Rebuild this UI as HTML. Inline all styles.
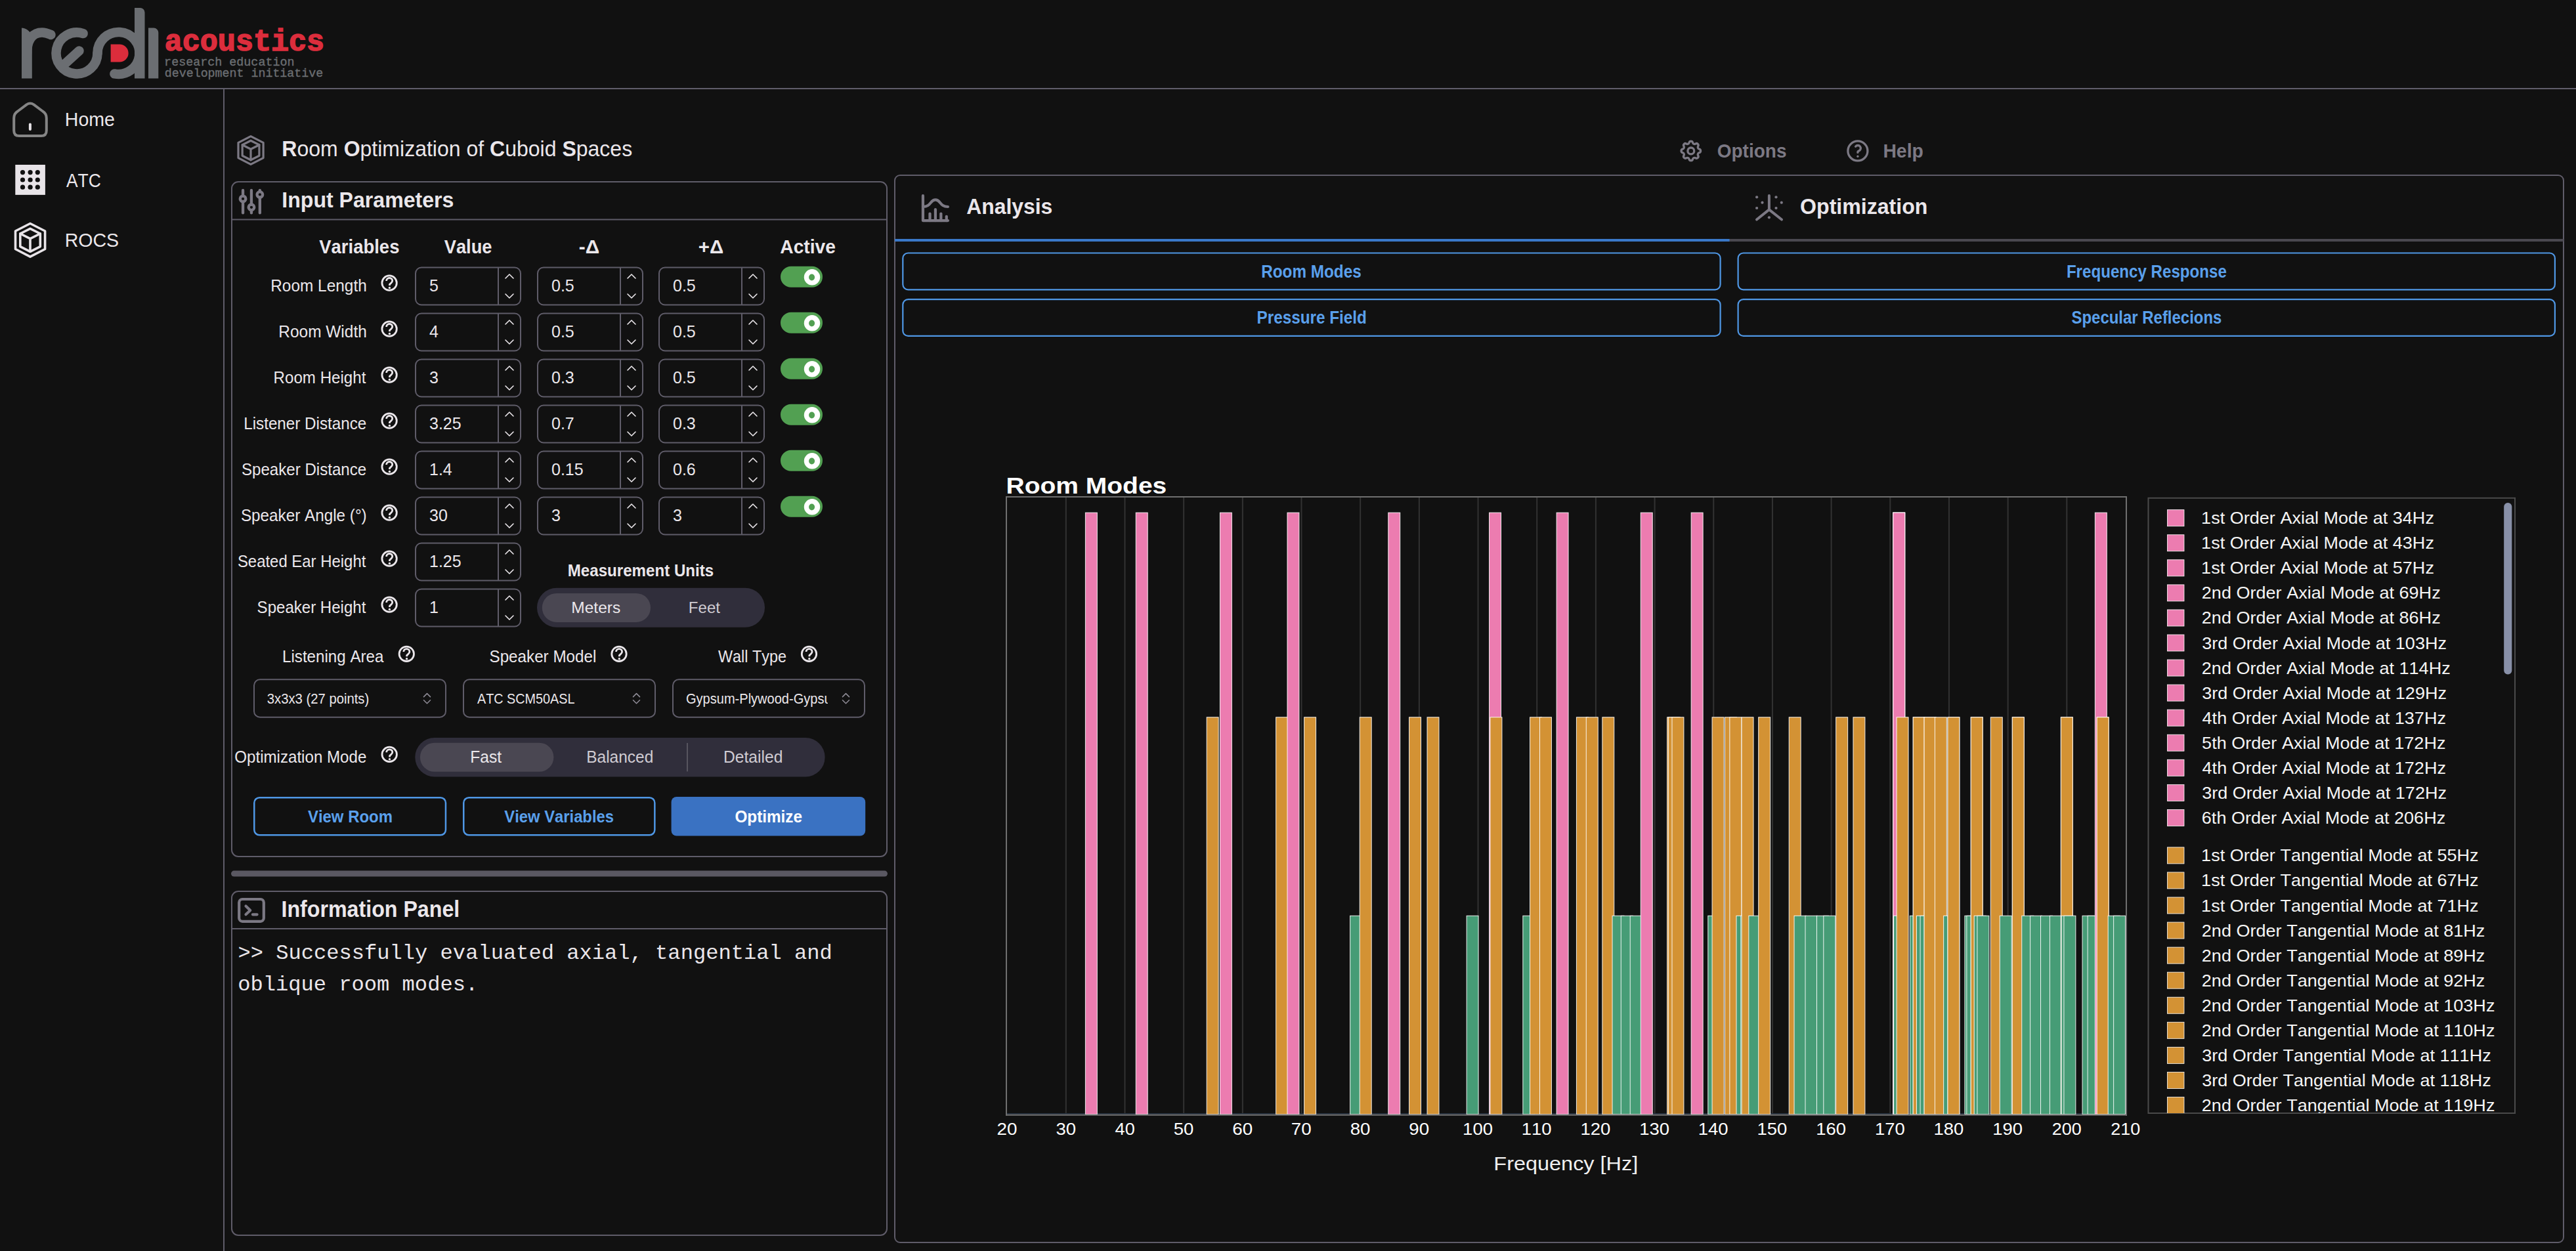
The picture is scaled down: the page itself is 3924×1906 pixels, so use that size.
<!DOCTYPE html>
<html><head><meta charset="utf-8"><title>ROCS</title>
<style>html,body{margin:0;padding:0;background:#111111;overflow:hidden} svg{display:block} text{font-kerning:none}</style></head>
<body><svg width="3924" height="1906" viewBox="0 0 3924 1906">
<rect x="0" y="0" width="3924" height="1906" rx="0" fill="#111111" />
<rect x="0" y="134" width="3924" height="2" rx="0" fill="#5f5c69" />
<rect x="340" y="136" width="2" height="1770" rx="0" fill="#5f5c69" />
<g fill="none" stroke="#6b6e72" stroke-width="14.5">
<path d="M33 119.5 V42.6 Q40.5 43.2 44.8 48.2 L48.8 52 V119.5 Z" fill="#6b6e72" stroke="none"/>
<path d="M41 82 C41 58 52 49.5 64 49.5 C70 49.5 73 51 77.5 53" stroke-linecap="round"/>
<path d="M126.73 51.04 A31.5 31.5 0 1 0 148.5 81" stroke-linecap="round"/>
<path d="M98 98 L120.5 77.5" stroke-linecap="round"/>
<path d="M148.5 81 A32 32 0 1 1 174.39 112.41" stroke-linecap="round"/>
</g>
<path d="M205 119.5 V12 H213.5 A7 7 0 0 1 220.5 19 V119.5 Z" fill="#6b6e72"/>
<path d="M226 119.5 V42.6 H234.3 A7 7 0 0 1 241.3 49.6 V119.5 Z" fill="#6b6e72"/>
<path d="M168.6 67.5 H182.1 A13.5 13.5 0 0 1 182.1 94.5 H168.6 Z" fill="#dc2d3c"/>
<text x="250.77" y="77.4" font-family="Liberation Mono" font-size="44" font-weight="700" fill="#dc2d3c" textLength="243.28" lengthAdjust="spacingAndGlyphs" stroke="#dc2d3c" stroke-width="1.6" transform="translate(0,77.4) scale(1,1.04) translate(0,-77.4)">acoustics</text>
<text x="250.13" y="99.6" font-family="Liberation Mono" font-size="18.2" font-weight="400" fill="#6b6e72" textLength="198.38" lengthAdjust="spacingAndGlyphs" stroke="#6b6e72" stroke-width="0.35">research education</text>
<text x="250.77" y="116.6" font-family="Liberation Mono" font-size="18.2" font-weight="400" fill="#6b6e72" textLength="241.44" lengthAdjust="spacingAndGlyphs" stroke="#6b6e72" stroke-width="0.35">development initiative</text>
<path d="M21.2 180 Q21.2 173 27 169.5 L40.5 159.3 Q46 155.6 51.5 159.3 L65 169.5 Q70.8 173 70.8 180 V199 Q70.8 207 62.8 207 H29.2 Q21.2 207 21.2 199 Z" fill="none" stroke="#858585" stroke-width="4" stroke-linejoin="round"/>
<path d="M45.9 189.6 V196.9" stroke="#e6e2e6" stroke-width="4" stroke-linecap="round"/>
<text x="98.86" y="192.3" font-family="Liberation Sans" font-size="30.23" font-weight="400" fill="#ebe7eb" textLength="76.11" lengthAdjust="spacingAndGlyphs" >Home</text>
<rect x="23.3" y="251" width="45.6" height="45.9" rx="0" fill="#e8e4e8" />
<circle cx="34.5" cy="262.6" r="3.6" fill="#111111"/>
<circle cx="46.1" cy="262.6" r="3.6" fill="#111111"/>
<circle cx="57.3" cy="262.6" r="3.6" fill="#111111"/>
<circle cx="34.5" cy="274" r="3.6" fill="#111111"/>
<circle cx="46.1" cy="274" r="3.6" fill="#111111"/>
<circle cx="57.3" cy="274" r="3.6" fill="#111111"/>
<circle cx="34.5" cy="285.2" r="3.6" fill="#111111"/>
<circle cx="46.1" cy="285.2" r="3.6" fill="#111111"/>
<circle cx="57.3" cy="285.2" r="3.6" fill="#111111"/>
<text x="100.95" y="284.8" font-family="Liberation Sans" font-size="29.8" font-weight="400" fill="#ebe7eb" textLength="52.86" lengthAdjust="spacingAndGlyphs" >ATC</text>
<g fill="none" stroke="#e8e4e8" stroke-width="3.6" stroke-linejoin="round" stroke-linecap="round">
<path d="M46 340.5 L68.6 352 L68.6 379.5 L46 391.1 L23.5 379.5 L23.5 352 Z"/>
<path d="M46 348.3 L61.3 356 L61.3 375.6 L46 383.3 L30.8 375.6 L30.8 356 Z"/>
<path d="M30.8 356 L46 363.7 L61.3 356 M46 363.7 L46 383.3"/>
</g>
<text x="98.66" y="376.4" font-family="Liberation Sans" font-size="29.65" font-weight="400" fill="#ebe7eb" textLength="82.45" lengthAdjust="spacingAndGlyphs" >ROCS</text>
<g fill="none" stroke="#7c7984" stroke-width="3.2" stroke-linejoin="round" stroke-linecap="round">
<path d="M382 207.62 L401.1 217.34 L401.1 240.58 L382 250.38 L362.99 240.58 L362.99 217.34 Z"/>
<path d="M382 214.21 L394.93 220.72 L394.93 237.28 L382 243.79 L369.16 237.28 L369.16 220.72 Z"/>
<path d="M369.16 220.72 L382 227.23 L394.93 220.72 M382 227.23 L382 243.79"/>
</g>
<text x="429.36" y="238.2" font-family="Liberation Sans" font-size="33.58" fill="#ebe7eb" textLength="533.8" lengthAdjust="spacingAndGlyphs" ><tspan font-weight="700">R</tspan><tspan font-weight="400">oom </tspan><tspan font-weight="700">O</tspan><tspan font-weight="400">ptimization of </tspan><tspan font-weight="700">C</tspan><tspan font-weight="400">uboid </tspan><tspan font-weight="700">S</tspan><tspan font-weight="400">paces</tspan></text>
<g transform="translate(2556.12,210.22) scale(1.64)" fill="none" stroke="#7c7984" stroke-width="2.0121951219512195" stroke-linecap="round" stroke-linejoin="round">
<path d="M10.325 4.317c.426 -1.756 2.924 -1.756 3.35 0a1.724 1.724 0 0 0 2.573 1.066c1.543 -.94 3.31 .826 2.37 2.37a1.724 1.724 0 0 0 1.065 2.572c1.756 .426 1.756 2.924 0 3.35a1.724 1.724 0 0 0 -1.066 2.573c.94 1.543 -.826 3.31 -2.37 2.37a1.724 1.724 0 0 0 -2.572 1.065c-.426 1.756 -2.924 1.756 -3.35 0a1.724 1.724 0 0 0 -2.573 -1.066c-1.543 .94 -3.31 -.826 -2.37 -2.37a1.724 1.724 0 0 0 -1.065 -2.572c-1.756 -.426 -1.756 -2.924 0 -3.35a1.724 1.724 0 0 0 1.066 -2.573c-.94 -1.543 .826 -3.31 2.37 -2.37c1 .608 2.296 .07 2.572 -1.065z"/>
<circle cx="12" cy="12" r="3"/></g>
<text x="2615.75" y="240.3" font-family="Liberation Sans" font-size="29.94" font-weight="700" fill="#7c7984" textLength="105.7" lengthAdjust="spacingAndGlyphs" >Options</text>
<g transform="translate(2809.9,209.9) scale(1.667)" fill="none" stroke="#7c7984" stroke-width="1.98" stroke-linecap="round" stroke-linejoin="round"><circle cx="12" cy="12" r="9"/><path d="M12 17v.01"/><path d="M12 13.5a1.5 1.5 0 0 1 1 -1.5a2.6 2.6 0 1 0 -3 -4"/></g>
<text x="2868.4" y="240.3" font-family="Liberation Sans" font-size="29.94" font-weight="700" fill="#7c7984" textLength="61.46" lengthAdjust="spacingAndGlyphs" >Help</text>
<rect x="353" y="277" width="998" height="1028" rx="10" fill="none" stroke="#5f5c69" stroke-width="2" />
<rect x="353" y="333.5" width="998" height="2" rx="0" fill="#5f5c69" />
<g transform="translate(357.15,281.4) scale(2.15)" fill="none" stroke="#7c7984" stroke-width="2" stroke-linecap="round" stroke-linejoin="round"><path d="M4 10a2 2 0 1 0 4 0a2 2 0 0 0 -4 0"/><path d="M6 4v4"/><path d="M6 12v8"/><path d="M10 16a2 2 0 1 0 4 0a2 2 0 0 0 -4 0"/><path d="M12 4v10"/><path d="M12 18v2"/><path d="M16 7a2 2 0 1 0 4 0a2 2 0 0 0 -4 0"/><path d="M18 4v1"/><path d="M18 9v11"/></g>
<text x="429.35" y="316.4" font-family="Liberation Sans" font-size="33.58" font-weight="700" fill="#ebe7eb" textLength="261.96" lengthAdjust="spacingAndGlyphs" >Input Parameters</text>
<text x="486.21" y="386.1" font-family="Liberation Sans" font-size="29.22" font-weight="700" fill="#ebe7eb" textLength="122.22" lengthAdjust="spacingAndGlyphs" >Variables</text>
<text x="676.71" y="386.1" font-family="Liberation Sans" font-size="29.22" font-weight="700" fill="#ebe7eb" textLength="72.82" lengthAdjust="spacingAndGlyphs" >Value</text>
<text x="881.83" y="386.1" font-family="Liberation Sans" font-size="29.22" font-weight="700" fill="#ebe7eb" textLength="31.39" lengthAdjust="spacingAndGlyphs" >-Δ</text>
<text x="1063.76" y="386.1" font-family="Liberation Sans" font-size="29.22" font-weight="700" fill="#ebe7eb" textLength="38.45" lengthAdjust="spacingAndGlyphs" >+Δ</text>
<text x="1188.3" y="386.1" font-family="Liberation Sans" font-size="29.22" font-weight="700" fill="#ebe7eb" textLength="84.67" lengthAdjust="spacingAndGlyphs" >Active</text>
<text x="412.2" y="444.2" font-family="Liberation Sans" font-size="25.15" font-weight="400" fill="#ebe7eb" textLength="146.59" lengthAdjust="spacingAndGlyphs" >Room Length</text>
<circle cx="593.1" cy="431.1" r="11.2" fill="none" stroke="#ebe7eb" stroke-width="2.8"/>
<path d="M588.6 427.9 C588.6 425.2 590.7 423.5 593.2 423.5 C595.9 423.5 597.7 425.5 597.7 427.8 C597.7 430.6 595.1 431.3 593.5 433.3 L593.5 435.1" fill="none" stroke="#ebe7eb" stroke-width="2.8" stroke-linecap="butt"/>
<circle cx="593.4" cy="438.5" r="1.7" fill="#ebe7eb"/>
<rect x="633" y="407.5" width="160" height="57" rx="9" fill="none" stroke="#5f5c69" stroke-width="2" />
<rect x="758" y="407.5" width="2" height="57" rx="0" fill="#5f5c69" />
<path d="M770 424 L776 418 L782 424 M770 448 L776 454 L782 448" fill="none" stroke="#ebe7eb" stroke-width="1.6" stroke-linecap="round" stroke-linejoin="round"/>
<text x="654" y="443.5" font-family="Liberation Sans" font-size="25" fill="#ebe7eb">5</text>
<rect x="819" y="407.5" width="160" height="57" rx="9" fill="none" stroke="#5f5c69" stroke-width="2" />
<rect x="944" y="407.5" width="2" height="57" rx="0" fill="#5f5c69" />
<path d="M956 424 L962 418 L968 424 M956 448 L962 454 L968 448" fill="none" stroke="#ebe7eb" stroke-width="1.6" stroke-linecap="round" stroke-linejoin="round"/>
<text x="840" y="443.5" font-family="Liberation Sans" font-size="25" fill="#ebe7eb">0.5</text>
<rect x="1004" y="407.5" width="160" height="57" rx="9" fill="none" stroke="#5f5c69" stroke-width="2" />
<rect x="1129" y="407.5" width="2" height="57" rx="0" fill="#5f5c69" />
<path d="M1141 424 L1147 418 L1153 424 M1141 448 L1147 454 L1153 448" fill="none" stroke="#ebe7eb" stroke-width="1.6" stroke-linecap="round" stroke-linejoin="round"/>
<text x="1025" y="443.5" font-family="Liberation Sans" font-size="25" fill="#ebe7eb">0.5</text>
<rect x="1189" y="405.8" width="64" height="32" rx="16" fill="#52a052" />
<circle cx="1237" cy="422.3" r="12.2" fill="#ffffff"/>
<ellipse cx="1236.6" cy="422.5" rx="4.5" ry="4.9" fill="#52a052"/>
<text x="424.29" y="514.2" font-family="Liberation Sans" font-size="25.15" font-weight="400" fill="#ebe7eb" textLength="134.49" lengthAdjust="spacingAndGlyphs" >Room Width</text>
<circle cx="593.1" cy="501.1" r="11.2" fill="none" stroke="#ebe7eb" stroke-width="2.8"/>
<path d="M588.6 497.9 C588.6 495.2 590.7 493.5 593.2 493.5 C595.9 493.5 597.7 495.5 597.7 497.8 C597.7 500.6 595.1 501.3 593.5 503.3 L593.5 505.1" fill="none" stroke="#ebe7eb" stroke-width="2.8" stroke-linecap="butt"/>
<circle cx="593.4" cy="508.5" r="1.7" fill="#ebe7eb"/>
<rect x="633" y="477.5" width="160" height="57" rx="9" fill="none" stroke="#5f5c69" stroke-width="2" />
<rect x="758" y="477.5" width="2" height="57" rx="0" fill="#5f5c69" />
<path d="M770 494 L776 488 L782 494 M770 518 L776 524 L782 518" fill="none" stroke="#ebe7eb" stroke-width="1.6" stroke-linecap="round" stroke-linejoin="round"/>
<text x="654" y="513.5" font-family="Liberation Sans" font-size="25" fill="#ebe7eb">4</text>
<rect x="819" y="477.5" width="160" height="57" rx="9" fill="none" stroke="#5f5c69" stroke-width="2" />
<rect x="944" y="477.5" width="2" height="57" rx="0" fill="#5f5c69" />
<path d="M956 494 L962 488 L968 494 M956 518 L962 524 L968 518" fill="none" stroke="#ebe7eb" stroke-width="1.6" stroke-linecap="round" stroke-linejoin="round"/>
<text x="840" y="513.5" font-family="Liberation Sans" font-size="25" fill="#ebe7eb">0.5</text>
<rect x="1004" y="477.5" width="160" height="57" rx="9" fill="none" stroke="#5f5c69" stroke-width="2" />
<rect x="1129" y="477.5" width="2" height="57" rx="0" fill="#5f5c69" />
<path d="M1141 494 L1147 488 L1153 494 M1141 518 L1147 524 L1153 518" fill="none" stroke="#ebe7eb" stroke-width="1.6" stroke-linecap="round" stroke-linejoin="round"/>
<text x="1025" y="513.5" font-family="Liberation Sans" font-size="25" fill="#ebe7eb">0.5</text>
<rect x="1189" y="475.8" width="64" height="32" rx="16" fill="#52a052" />
<circle cx="1237" cy="492.3" r="12.2" fill="#ffffff"/>
<ellipse cx="1236.6" cy="492.5" rx="4.5" ry="4.9" fill="#52a052"/>
<text x="416.62" y="584.2" font-family="Liberation Sans" font-size="25.15" font-weight="400" fill="#ebe7eb" textLength="140.76" lengthAdjust="spacingAndGlyphs" >Room Height</text>
<circle cx="593.1" cy="571.1" r="11.2" fill="none" stroke="#ebe7eb" stroke-width="2.8"/>
<path d="M588.6 567.9 C588.6 565.2 590.7 563.5 593.2 563.5 C595.9 563.5 597.7 565.5 597.7 567.8 C597.7 570.6 595.1 571.3 593.5 573.3 L593.5 575.1" fill="none" stroke="#ebe7eb" stroke-width="2.8" stroke-linecap="butt"/>
<circle cx="593.4" cy="578.5" r="1.7" fill="#ebe7eb"/>
<rect x="633" y="547.5" width="160" height="57" rx="9" fill="none" stroke="#5f5c69" stroke-width="2" />
<rect x="758" y="547.5" width="2" height="57" rx="0" fill="#5f5c69" />
<path d="M770 564 L776 558 L782 564 M770 588 L776 594 L782 588" fill="none" stroke="#ebe7eb" stroke-width="1.6" stroke-linecap="round" stroke-linejoin="round"/>
<text x="654" y="583.5" font-family="Liberation Sans" font-size="25" fill="#ebe7eb">3</text>
<rect x="819" y="547.5" width="160" height="57" rx="9" fill="none" stroke="#5f5c69" stroke-width="2" />
<rect x="944" y="547.5" width="2" height="57" rx="0" fill="#5f5c69" />
<path d="M956 564 L962 558 L968 564 M956 588 L962 594 L968 588" fill="none" stroke="#ebe7eb" stroke-width="1.6" stroke-linecap="round" stroke-linejoin="round"/>
<text x="840" y="583.5" font-family="Liberation Sans" font-size="25" fill="#ebe7eb">0.3</text>
<rect x="1004" y="547.5" width="160" height="57" rx="9" fill="none" stroke="#5f5c69" stroke-width="2" />
<rect x="1129" y="547.5" width="2" height="57" rx="0" fill="#5f5c69" />
<path d="M1141 564 L1147 558 L1153 564 M1141 588 L1147 594 L1153 588" fill="none" stroke="#ebe7eb" stroke-width="1.6" stroke-linecap="round" stroke-linejoin="round"/>
<text x="1025" y="583.5" font-family="Liberation Sans" font-size="25" fill="#ebe7eb">0.5</text>
<rect x="1189" y="545.8" width="64" height="32" rx="16" fill="#52a052" />
<circle cx="1237" cy="562.3" r="12.2" fill="#ffffff"/>
<ellipse cx="1236.6" cy="562.5" rx="4.5" ry="4.9" fill="#52a052"/>
<text x="371.21" y="654.2" font-family="Liberation Sans" font-size="25.15" font-weight="400" fill="#ebe7eb" textLength="187.06" lengthAdjust="spacingAndGlyphs" >Listener Distance</text>
<circle cx="593.1" cy="641.1" r="11.2" fill="none" stroke="#ebe7eb" stroke-width="2.8"/>
<path d="M588.6 637.9 C588.6 635.2 590.7 633.5 593.2 633.5 C595.9 633.5 597.7 635.5 597.7 637.8 C597.7 640.6 595.1 641.3 593.5 643.3 L593.5 645.1" fill="none" stroke="#ebe7eb" stroke-width="2.8" stroke-linecap="butt"/>
<circle cx="593.4" cy="648.5" r="1.7" fill="#ebe7eb"/>
<rect x="633" y="617.5" width="160" height="57" rx="9" fill="none" stroke="#5f5c69" stroke-width="2" />
<rect x="758" y="617.5" width="2" height="57" rx="0" fill="#5f5c69" />
<path d="M770 634 L776 628 L782 634 M770 658 L776 664 L782 658" fill="none" stroke="#ebe7eb" stroke-width="1.6" stroke-linecap="round" stroke-linejoin="round"/>
<text x="654" y="653.5" font-family="Liberation Sans" font-size="25" fill="#ebe7eb">3.25</text>
<rect x="819" y="617.5" width="160" height="57" rx="9" fill="none" stroke="#5f5c69" stroke-width="2" />
<rect x="944" y="617.5" width="2" height="57" rx="0" fill="#5f5c69" />
<path d="M956 634 L962 628 L968 634 M956 658 L962 664 L968 658" fill="none" stroke="#ebe7eb" stroke-width="1.6" stroke-linecap="round" stroke-linejoin="round"/>
<text x="840" y="653.5" font-family="Liberation Sans" font-size="25" fill="#ebe7eb">0.7</text>
<rect x="1004" y="617.5" width="160" height="57" rx="9" fill="none" stroke="#5f5c69" stroke-width="2" />
<rect x="1129" y="617.5" width="2" height="57" rx="0" fill="#5f5c69" />
<path d="M1141 634 L1147 628 L1153 634 M1141 658 L1147 664 L1153 658" fill="none" stroke="#ebe7eb" stroke-width="1.6" stroke-linecap="round" stroke-linejoin="round"/>
<text x="1025" y="653.5" font-family="Liberation Sans" font-size="25" fill="#ebe7eb">0.3</text>
<rect x="1189" y="615.8" width="64" height="32" rx="16" fill="#52a052" />
<circle cx="1237" cy="632.3" r="12.2" fill="#ffffff"/>
<ellipse cx="1236.6" cy="632.5" rx="4.5" ry="4.9" fill="#52a052"/>
<text x="367.9" y="724.2" font-family="Liberation Sans" font-size="25.15" font-weight="400" fill="#ebe7eb" textLength="190.37" lengthAdjust="spacingAndGlyphs" >Speaker Distance</text>
<circle cx="593.1" cy="711.1" r="11.2" fill="none" stroke="#ebe7eb" stroke-width="2.8"/>
<path d="M588.6 707.9 C588.6 705.2 590.7 703.5 593.2 703.5 C595.9 703.5 597.7 705.5 597.7 707.8 C597.7 710.6 595.1 711.3 593.5 713.3 L593.5 715.1" fill="none" stroke="#ebe7eb" stroke-width="2.8" stroke-linecap="butt"/>
<circle cx="593.4" cy="718.5" r="1.7" fill="#ebe7eb"/>
<rect x="633" y="687.5" width="160" height="57" rx="9" fill="none" stroke="#5f5c69" stroke-width="2" />
<rect x="758" y="687.5" width="2" height="57" rx="0" fill="#5f5c69" />
<path d="M770 704 L776 698 L782 704 M770 728 L776 734 L782 728" fill="none" stroke="#ebe7eb" stroke-width="1.6" stroke-linecap="round" stroke-linejoin="round"/>
<text x="654" y="723.5" font-family="Liberation Sans" font-size="25" fill="#ebe7eb">1.4</text>
<rect x="819" y="687.5" width="160" height="57" rx="9" fill="none" stroke="#5f5c69" stroke-width="2" />
<rect x="944" y="687.5" width="2" height="57" rx="0" fill="#5f5c69" />
<path d="M956 704 L962 698 L968 704 M956 728 L962 734 L968 728" fill="none" stroke="#ebe7eb" stroke-width="1.6" stroke-linecap="round" stroke-linejoin="round"/>
<text x="840" y="723.5" font-family="Liberation Sans" font-size="25" fill="#ebe7eb">0.15</text>
<rect x="1004" y="687.5" width="160" height="57" rx="9" fill="none" stroke="#5f5c69" stroke-width="2" />
<rect x="1129" y="687.5" width="2" height="57" rx="0" fill="#5f5c69" />
<path d="M1141 704 L1147 698 L1153 704 M1141 728 L1147 734 L1153 728" fill="none" stroke="#ebe7eb" stroke-width="1.6" stroke-linecap="round" stroke-linejoin="round"/>
<text x="1025" y="723.5" font-family="Liberation Sans" font-size="25" fill="#ebe7eb">0.6</text>
<rect x="1189" y="685.8" width="64" height="32" rx="16" fill="#52a052" />
<circle cx="1237" cy="702.3" r="12.2" fill="#ffffff"/>
<ellipse cx="1236.6" cy="702.5" rx="4.5" ry="4.9" fill="#52a052"/>
<text x="366.9" y="794.2" font-family="Liberation Sans" font-size="25.15" font-weight="400" fill="#ebe7eb" textLength="191.81" lengthAdjust="spacingAndGlyphs" >Speaker Angle (°)</text>
<circle cx="593.1" cy="781.1" r="11.2" fill="none" stroke="#ebe7eb" stroke-width="2.8"/>
<path d="M588.6 777.9 C588.6 775.2 590.7 773.5 593.2 773.5 C595.9 773.5 597.7 775.5 597.7 777.8 C597.7 780.6 595.1 781.3 593.5 783.3 L593.5 785.1" fill="none" stroke="#ebe7eb" stroke-width="2.8" stroke-linecap="butt"/>
<circle cx="593.4" cy="788.5" r="1.7" fill="#ebe7eb"/>
<rect x="633" y="757.5" width="160" height="57" rx="9" fill="none" stroke="#5f5c69" stroke-width="2" />
<rect x="758" y="757.5" width="2" height="57" rx="0" fill="#5f5c69" />
<path d="M770 774 L776 768 L782 774 M770 798 L776 804 L782 798" fill="none" stroke="#ebe7eb" stroke-width="1.6" stroke-linecap="round" stroke-linejoin="round"/>
<text x="654" y="793.5" font-family="Liberation Sans" font-size="25" fill="#ebe7eb">30</text>
<rect x="819" y="757.5" width="160" height="57" rx="9" fill="none" stroke="#5f5c69" stroke-width="2" />
<rect x="944" y="757.5" width="2" height="57" rx="0" fill="#5f5c69" />
<path d="M956 774 L962 768 L968 774 M956 798 L962 804 L968 798" fill="none" stroke="#ebe7eb" stroke-width="1.6" stroke-linecap="round" stroke-linejoin="round"/>
<text x="840" y="793.5" font-family="Liberation Sans" font-size="25" fill="#ebe7eb">3</text>
<rect x="1004" y="757.5" width="160" height="57" rx="9" fill="none" stroke="#5f5c69" stroke-width="2" />
<rect x="1129" y="757.5" width="2" height="57" rx="0" fill="#5f5c69" />
<path d="M1141 774 L1147 768 L1153 774 M1141 798 L1147 804 L1153 798" fill="none" stroke="#ebe7eb" stroke-width="1.6" stroke-linecap="round" stroke-linejoin="round"/>
<text x="1025" y="793.5" font-family="Liberation Sans" font-size="25" fill="#ebe7eb">3</text>
<rect x="1189" y="755.8" width="64" height="32" rx="16" fill="#52a052" />
<circle cx="1237" cy="772.3" r="12.2" fill="#ffffff"/>
<ellipse cx="1236.6" cy="772.5" rx="4.5" ry="4.9" fill="#52a052"/>
<text x="361.91" y="864.2" font-family="Liberation Sans" font-size="25.15" font-weight="400" fill="#ebe7eb" textLength="195.46" lengthAdjust="spacingAndGlyphs" >Seated Ear Height</text>
<circle cx="593.1" cy="851.1" r="11.2" fill="none" stroke="#ebe7eb" stroke-width="2.8"/>
<path d="M588.6 847.9 C588.6 845.2 590.7 843.5 593.2 843.5 C595.9 843.5 597.7 845.5 597.7 847.8 C597.7 850.6 595.1 851.3 593.5 853.3 L593.5 855.1" fill="none" stroke="#ebe7eb" stroke-width="2.8" stroke-linecap="butt"/>
<circle cx="593.4" cy="858.5" r="1.7" fill="#ebe7eb"/>
<rect x="633" y="827.5" width="160" height="57" rx="9" fill="none" stroke="#5f5c69" stroke-width="2" />
<rect x="758" y="827.5" width="2" height="57" rx="0" fill="#5f5c69" />
<path d="M770 844 L776 838 L782 844 M770 868 L776 874 L782 868" fill="none" stroke="#ebe7eb" stroke-width="1.6" stroke-linecap="round" stroke-linejoin="round"/>
<text x="654" y="863.5" font-family="Liberation Sans" font-size="25" fill="#ebe7eb">1.25</text>
<text x="391.61" y="934.2" font-family="Liberation Sans" font-size="25.15" font-weight="400" fill="#ebe7eb" textLength="165.77" lengthAdjust="spacingAndGlyphs" >Speaker Height</text>
<circle cx="593.1" cy="921.1" r="11.2" fill="none" stroke="#ebe7eb" stroke-width="2.8"/>
<path d="M588.6 917.9 C588.6 915.2 590.7 913.5 593.2 913.5 C595.9 913.5 597.7 915.5 597.7 917.8 C597.7 920.6 595.1 921.3 593.5 923.3 L593.5 925.1" fill="none" stroke="#ebe7eb" stroke-width="2.8" stroke-linecap="butt"/>
<circle cx="593.4" cy="928.5" r="1.7" fill="#ebe7eb"/>
<rect x="633" y="897.5" width="160" height="57" rx="9" fill="none" stroke="#5f5c69" stroke-width="2" />
<rect x="758" y="897.5" width="2" height="57" rx="0" fill="#5f5c69" />
<path d="M770 914 L776 908 L782 914 M770 938 L776 944 L782 938" fill="none" stroke="#ebe7eb" stroke-width="1.6" stroke-linecap="round" stroke-linejoin="round"/>
<text x="654" y="933.5" font-family="Liberation Sans" font-size="25" fill="#ebe7eb">1</text>
<text x="864.79" y="878.4" font-family="Liberation Sans" font-size="25.73" font-weight="700" fill="#ebe7eb" textLength="222.4" lengthAdjust="spacingAndGlyphs" >Measurement Units</text>
<rect x="818" y="895.8" width="347" height="60" rx="30" fill="#302e3b" />
<rect x="825.8" y="903.9" width="165.2" height="44.1" rx="22" fill="#4a4752" />
<text x="870.29" y="933.7" font-family="Liberation Sans" font-size="24.71" font-weight="400" fill="#ebe7eb" textLength="74.9" lengthAdjust="spacingAndGlyphs" >Meters</text>
<text x="1048.83" y="933.7" font-family="Liberation Sans" font-size="24.71" font-weight="400" fill="#cfcbd2" textLength="48.15" lengthAdjust="spacingAndGlyphs" >Feet</text>
<text x="430.02" y="1008.5" font-family="Liberation Sans" font-size="25.15" font-weight="400" fill="#ebe7eb" textLength="154.48" lengthAdjust="spacingAndGlyphs" >Listening Area</text>
<circle cx="619.3" cy="996.3" r="11.2" fill="none" stroke="#ebe7eb" stroke-width="2.8"/>
<path d="M614.8 993.1 C614.8 990.4 616.9 988.7 619.4 988.7 C622.1 988.7 623.9 990.7 623.9 993 C623.9 995.8 621.3 996.5 619.7 998.5 L619.7 1000.3" fill="none" stroke="#ebe7eb" stroke-width="2.8" stroke-linecap="butt"/>
<circle cx="619.6" cy="1003.7" r="1.7" fill="#ebe7eb"/>
<text x="745.5" y="1008.5" font-family="Liberation Sans" font-size="25.15" font-weight="400" fill="#ebe7eb" textLength="162.82" lengthAdjust="spacingAndGlyphs" >Speaker Model</text>
<circle cx="943" cy="996.3" r="11.2" fill="none" stroke="#ebe7eb" stroke-width="2.8"/>
<path d="M938.5 993.1 C938.5 990.4 940.6 988.7 943.1 988.7 C945.8 988.7 947.6 990.7 947.6 993 C947.6 995.8 945 996.5 943.4 998.5 L943.4 1000.3" fill="none" stroke="#ebe7eb" stroke-width="2.8" stroke-linecap="butt"/>
<circle cx="943.3" cy="1003.7" r="1.7" fill="#ebe7eb"/>
<text x="1093.9" y="1008.5" font-family="Liberation Sans" font-size="25.15" font-weight="400" fill="#ebe7eb" textLength="104.14" lengthAdjust="spacingAndGlyphs" >Wall Type</text>
<circle cx="1232.5" cy="996.3" r="11.2" fill="none" stroke="#ebe7eb" stroke-width="2.8"/>
<path d="M1228 993.1 C1228 990.4 1230.1 988.7 1232.6 988.7 C1235.3 988.7 1237.1 990.7 1237.1 993 C1237.1 995.8 1234.5 996.5 1232.9 998.5 L1232.9 1000.3" fill="none" stroke="#ebe7eb" stroke-width="2.8" stroke-linecap="butt"/>
<circle cx="1232.8" cy="1003.7" r="1.7" fill="#ebe7eb"/>
<rect x="387" y="1035.3" width="292" height="57.4" rx="9" fill="none" stroke="#5f5c69" stroke-width="2" />
<path d="M645.5 1061.6 L650.5 1056.6 L655.5 1061.6 M645.5 1066.8 L650.5 1071.8 L655.5 1066.8" fill="none" stroke="#8f8c97" stroke-width="1.5" stroke-linecap="round" stroke-linejoin="round"/>
<rect x="706" y="1035.3" width="292" height="57.4" rx="9" fill="none" stroke="#5f5c69" stroke-width="2" />
<path d="M964.5 1061.6 L969.5 1056.6 L974.5 1061.6 M964.5 1066.8 L969.5 1071.8 L974.5 1066.8" fill="none" stroke="#8f8c97" stroke-width="1.5" stroke-linecap="round" stroke-linejoin="round"/>
<rect x="1025" y="1035.3" width="292" height="57.4" rx="9" fill="none" stroke="#5f5c69" stroke-width="2" />
<path d="M1283.5 1061.6 L1288.5 1056.6 L1293.5 1061.6 M1283.5 1066.8 L1288.5 1071.8 L1293.5 1066.8" fill="none" stroke="#8f8c97" stroke-width="1.5" stroke-linecap="round" stroke-linejoin="round"/>
<text x="406.73" y="1072.1" font-family="Liberation Sans" font-size="21.51" font-weight="400" fill="#ebe7eb" textLength="155.53" lengthAdjust="spacingAndGlyphs" >3x3x3 (27 points)</text>
<text x="726.96" y="1072.1" font-family="Liberation Sans" font-size="21.51" font-weight="400" fill="#ebe7eb" textLength="148.6" lengthAdjust="spacingAndGlyphs" >ATC SCM50ASL</text>
<clipPath id="wclip"><rect x="1040" y="1040" width="221" height="50"/></clipPath>
<text x="1044.99" y="1072.1" font-family="Liberation Sans" font-size="21.51" font-weight="400" fill="#ebe7eb" textLength="238.33" lengthAdjust="spacingAndGlyphs" clip-path="url(#wclip)">Gypsum-Plywood-Gypsum</text>
<text x="357.26" y="1162.1" font-family="Liberation Sans" font-size="25.15" font-weight="400" fill="#ebe7eb" textLength="201.11" lengthAdjust="spacingAndGlyphs" >Optimization Mode</text>
<circle cx="593.2" cy="1149.4" r="11.2" fill="none" stroke="#ebe7eb" stroke-width="2.8"/>
<path d="M588.7 1146.2 C588.7 1143.5 590.8 1141.8 593.3 1141.8 C596 1141.8 597.8 1143.8 597.8 1146.1 C597.8 1148.9 595.2 1149.6 593.6 1151.6 L593.6 1153.4" fill="none" stroke="#ebe7eb" stroke-width="2.8" stroke-linecap="butt"/>
<circle cx="593.5" cy="1156.8" r="1.7" fill="#ebe7eb"/>
<rect x="632.3" y="1124.1" width="624.3" height="59.3" rx="29.6" fill="#302e3b" />
<rect x="639.9" y="1131.7" width="203.5" height="44.1" rx="22" fill="#4a4752" />
<rect x="1046" y="1132" width="2" height="43.4" rx="0" fill="#56545e" />
<text x="716.28" y="1162.1" font-family="Liberation Sans" font-size="25.15" font-weight="400" fill="#ebe7eb" textLength="47.8" lengthAdjust="spacingAndGlyphs" >Fast</text>
<text x="893.19" y="1162.1" font-family="Liberation Sans" font-size="25.15" font-weight="400" fill="#cfcbd2" textLength="102.09" lengthAdjust="spacingAndGlyphs" >Balanced</text>
<text x="1101.98" y="1162.1" font-family="Liberation Sans" font-size="25.15" font-weight="400" fill="#cfcbd2" textLength="90.41" lengthAdjust="spacingAndGlyphs" >Detailed</text>
<rect x="387.25" y="1215.15" width="291.7" height="57.2" rx="8" fill="none" stroke="#4f97e5" stroke-width="2.5" />
<rect x="706.25" y="1215.15" width="291.1" height="57.2" rx="8" fill="none" stroke="#4f97e5" stroke-width="2.5" />
<rect x="1022.6" y="1213.9" width="295.6" height="59.7" rx="8" fill="#3a72c2" />
<text x="468.94" y="1252.7" font-family="Liberation Sans" font-size="26.6" font-weight="700" fill="#5aa0ec" textLength="129.05" lengthAdjust="spacingAndGlyphs" >View Room</text>
<text x="768.34" y="1252.7" font-family="Liberation Sans" font-size="26.6" font-weight="700" fill="#5aa0ec" textLength="166.64" lengthAdjust="spacingAndGlyphs" >View Variables</text>
<text x="1119.4" y="1252.7" font-family="Liberation Sans" font-size="26.6" font-weight="700" fill="#ffffff" textLength="102.63" lengthAdjust="spacingAndGlyphs" >Optimize</text>
<rect x="352" y="1326.6" width="1000" height="9" rx="4.5" fill="#5a5862" />
<rect x="353" y="1358" width="998" height="524" rx="10" fill="none" stroke="#5f5c69" stroke-width="2" />
<rect x="353" y="1414" width="998" height="2" rx="0" fill="#5f5c69" />
<g fill="none" stroke="#7c7984" stroke-width="4.2" stroke-linecap="round" stroke-linejoin="round"><rect x="364.2" y="1370" width="37.6" height="33.8" rx="5"/><path d="M374.5 1380.4 L381.2 1387 L374.5 1393.3 M384.9 1393.3 H391.6"/></g>
<text x="428.45" y="1396.9" font-family="Liberation Sans" font-size="34.16" font-weight="700" fill="#ebe7eb" textLength="271.83" lengthAdjust="spacingAndGlyphs" >Information Panel</text>
<text x="362.38" y="1460.8" font-family="Liberation Mono" font-size="32" font-weight="400" fill="#ebe7eb" textLength="905.44" lengthAdjust="spacingAndGlyphs" >&gt;&gt; Successfully evaluated axial, tangential and</text>
<text x="362.16" y="1509.2" font-family="Liberation Mono" font-size="32" font-weight="400" fill="#ebe7eb" textLength="366.03" lengthAdjust="spacingAndGlyphs" >oblique room modes.</text>
<rect x="1363" y="267" width="2542" height="1626" rx="8" fill="none" stroke="#5f5c69" stroke-width="2" />
<g transform="translate(1399.6,291.8) scale(2.11)" fill="none" stroke="#7c7984" stroke-width="2" stroke-linecap="round" stroke-linejoin="round"><path d="M3 3v18h18"/><path d="M20 18v3"/><path d="M16 16v5"/><path d="M12 13v8"/><path d="M8 16v5"/><path d="M3 11c6 0 5 -5 9 -5s3 5 9 5"/></g>
<text x="1472.21" y="326.3" font-family="Liberation Sans" font-size="33.87" font-weight="700" fill="#ebe7eb" textLength="131.1" lengthAdjust="spacingAndGlyphs" >Analysis</text>
<g fill="none" stroke="#7c7984" stroke-width="4" stroke-linecap="round" stroke-linejoin="round"><path d="M2694.9 298 V319.4 L2714 334.5 M2694.9 319.4 L2676 334.5"/></g>
<circle cx="2676.1" cy="300.3" r="2.1" fill="#7c7984"/>
<circle cx="2684.5" cy="308.7" r="2.1" fill="#7c7984"/>
<circle cx="2676.1" cy="317" r="2.1" fill="#7c7984"/>
<circle cx="2705.5" cy="300.3" r="2.1" fill="#7c7984"/>
<circle cx="2713.8" cy="308.7" r="2.1" fill="#7c7984"/>
<circle cx="2705.5" cy="317" r="2.1" fill="#7c7984"/>
<circle cx="2694.9" cy="331.3" r="2.1" fill="#7c7984"/>
<text x="2742.08" y="325.7" font-family="Liberation Sans" font-size="32.85" font-weight="700" fill="#ebe7eb" textLength="194.31" lengthAdjust="spacingAndGlyphs" >Optimization</text>
<rect x="1363" y="364" width="2542" height="4" rx="0" fill="#4a4850" />
<rect x="1363" y="364" width="1271.5" height="4" rx="0" fill="#3a78c8" />
<rect x="1375.3" y="385.5" width="1245.3" height="55.8" rx="8" fill="none" stroke="#4f97e5" stroke-width="2.2" />
<text x="1921.17" y="423.3" font-family="Liberation Sans" font-size="27.18" font-weight="700" fill="#5aa0ec" textLength="152.52" lengthAdjust="spacingAndGlyphs" >Room Modes</text>
<rect x="1375.3" y="456.1" width="1245.3" height="55.8" rx="8" fill="none" stroke="#4f97e5" stroke-width="2.2" />
<text x="1914.58" y="493.2" font-family="Liberation Sans" font-size="27.18" font-weight="700" fill="#5aa0ec" textLength="167.32" lengthAdjust="spacingAndGlyphs" >Pressure Field</text>
<rect x="2647.6" y="385.5" width="1244.3" height="55.8" rx="8" fill="none" stroke="#4f97e5" stroke-width="2.2" />
<text x="3147.89" y="423.3" font-family="Liberation Sans" font-size="27.18" font-weight="700" fill="#5aa0ec" textLength="244.04" lengthAdjust="spacingAndGlyphs" >Frequency Response</text>
<rect x="2647.6" y="456.1" width="1244.3" height="55.8" rx="8" fill="none" stroke="#4f97e5" stroke-width="2.2" />
<text x="3155.51" y="493.2" font-family="Liberation Sans" font-size="27.18" font-weight="700" fill="#5aa0ec" textLength="228.87" lengthAdjust="spacingAndGlyphs" >Specular Reflecions</text>
<rect x="1622.78" y="757" width="2" height="940.8" rx="0" fill="#323232" />
<rect x="1712.46" y="757" width="2" height="940.8" rx="0" fill="#323232" />
<rect x="1802.14" y="757" width="2" height="940.8" rx="0" fill="#323232" />
<rect x="1891.82" y="757" width="2" height="940.8" rx="0" fill="#323232" />
<rect x="1981.49" y="757" width="2" height="940.8" rx="0" fill="#323232" />
<rect x="2071.17" y="757" width="2" height="940.8" rx="0" fill="#323232" />
<rect x="2160.85" y="757" width="2" height="940.8" rx="0" fill="#323232" />
<rect x="2250.53" y="757" width="2" height="940.8" rx="0" fill="#323232" />
<rect x="2340.21" y="757" width="2" height="940.8" rx="0" fill="#323232" />
<rect x="2429.89" y="757" width="2" height="940.8" rx="0" fill="#323232" />
<rect x="2519.57" y="757" width="2" height="940.8" rx="0" fill="#323232" />
<rect x="2609.25" y="757" width="2" height="940.8" rx="0" fill="#323232" />
<rect x="2698.93" y="757" width="2" height="940.8" rx="0" fill="#323232" />
<rect x="2788.61" y="757" width="2" height="940.8" rx="0" fill="#323232" />
<rect x="2878.28" y="757" width="2" height="940.8" rx="0" fill="#323232" />
<rect x="2967.96" y="757" width="2" height="940.8" rx="0" fill="#323232" />
<rect x="3057.64" y="757" width="2" height="940.8" rx="0" fill="#323232" />
<rect x="3147.32" y="757" width="2" height="940.8" rx="0" fill="#323232" />
<rect x="1534" y="1696" width="1704" height="1.8" rx="0" fill="#283442" />
<clipPath id="pclip"><rect x="1533" y="757" width="1705" height="941"/></clipPath><g clip-path="url(#pclip)">
<rect x="1653.37" y="781.1" width="17.94" height="916.7" fill="#ec7cb0" stroke="#ffffff" stroke-opacity="0.9" stroke-width="1"/>
<rect x="1730.27" y="781.1" width="17.94" height="916.7" fill="#ec7cb0" stroke="#ffffff" stroke-opacity="0.9" stroke-width="1"/>
<rect x="1838.17" y="1092.78" width="17.94" height="605.02" fill="#d39234" stroke="#ffffff" stroke-opacity="0.9" stroke-width="1"/>
<rect x="1858.44" y="781.1" width="17.94" height="916.7" fill="#ec7cb0" stroke="#ffffff" stroke-opacity="0.9" stroke-width="1"/>
<rect x="1943.64" y="1092.78" width="17.94" height="605.02" fill="#d39234" stroke="#ffffff" stroke-opacity="0.9" stroke-width="1"/>
<rect x="1960.97" y="781.1" width="17.94" height="916.7" fill="#ec7cb0" stroke="#ffffff" stroke-opacity="0.9" stroke-width="1"/>
<rect x="1986.61" y="1092.78" width="17.94" height="605.02" fill="#d39234" stroke="#ffffff" stroke-opacity="0.9" stroke-width="1"/>
<rect x="2056.61" y="1395.29" width="17.94" height="302.51" fill="#469c76" stroke="#ffffff" stroke-opacity="0.9" stroke-width="1"/>
<rect x="2071.24" y="1092.78" width="17.94" height="605.02" fill="#d39234" stroke="#ffffff" stroke-opacity="0.9" stroke-width="1"/>
<rect x="2114.77" y="781.1" width="17.94" height="916.7" fill="#ec7cb0" stroke="#ffffff" stroke-opacity="0.9" stroke-width="1"/>
<rect x="2146.58" y="1092.78" width="17.94" height="605.02" fill="#d39234" stroke="#ffffff" stroke-opacity="0.9" stroke-width="1"/>
<rect x="2174.01" y="1092.78" width="17.94" height="605.02" fill="#d39234" stroke="#ffffff" stroke-opacity="0.9" stroke-width="1"/>
<rect x="2234.11" y="1395.29" width="17.94" height="302.51" fill="#469c76" stroke="#ffffff" stroke-opacity="0.9" stroke-width="1"/>
<rect x="2268.57" y="781.1" width="17.94" height="916.7" fill="#ec7cb0" stroke="#ffffff" stroke-opacity="0.9" stroke-width="1"/>
<rect x="2269.99" y="1092.78" width="17.94" height="605.02" fill="#d39234" stroke="#ffffff" stroke-opacity="0.9" stroke-width="1"/>
<rect x="2319.84" y="1395.29" width="17.94" height="302.51" fill="#469c76" stroke="#ffffff" stroke-opacity="0.9" stroke-width="1"/>
<rect x="2330.57" y="1092.78" width="17.94" height="605.02" fill="#d39234" stroke="#ffffff" stroke-opacity="0.9" stroke-width="1"/>
<rect x="2345.47" y="1092.78" width="17.94" height="605.02" fill="#d39234" stroke="#ffffff" stroke-opacity="0.9" stroke-width="1"/>
<rect x="2371.1" y="781.1" width="17.94" height="916.7" fill="#ec7cb0" stroke="#ffffff" stroke-opacity="0.9" stroke-width="1"/>
<rect x="2401.42" y="1092.78" width="17.94" height="605.02" fill="#d39234" stroke="#ffffff" stroke-opacity="0.9" stroke-width="1"/>
<rect x="2416.25" y="1092.78" width="17.94" height="605.02" fill="#d39234" stroke="#ffffff" stroke-opacity="0.9" stroke-width="1"/>
<rect x="2440.83" y="1092.78" width="17.94" height="605.02" fill="#d39234" stroke="#ffffff" stroke-opacity="0.9" stroke-width="1"/>
<rect x="2456.02" y="1395.29" width="17.94" height="302.51" fill="#469c76" stroke="#ffffff" stroke-opacity="0.9" stroke-width="1"/>
<rect x="2469.26" y="1395.29" width="17.94" height="302.51" fill="#469c76" stroke="#ffffff" stroke-opacity="0.9" stroke-width="1"/>
<rect x="2483.21" y="1395.29" width="17.94" height="302.51" fill="#469c76" stroke="#ffffff" stroke-opacity="0.9" stroke-width="1"/>
<rect x="2499.27" y="781.1" width="17.94" height="916.7" fill="#ec7cb0" stroke="#ffffff" stroke-opacity="0.9" stroke-width="1"/>
<rect x="2539.58" y="1092.78" width="17.94" height="605.02" fill="#d39234" stroke="#ffffff" stroke-opacity="0.9" stroke-width="1"/>
<rect x="2541.5" y="1092.78" width="17.94" height="605.02" fill="#d39234" stroke="#ffffff" stroke-opacity="0.9" stroke-width="1"/>
<rect x="2546.99" y="1092.78" width="17.94" height="605.02" fill="#d39234" stroke="#ffffff" stroke-opacity="0.9" stroke-width="1"/>
<rect x="2576.17" y="781.1" width="17.94" height="916.7" fill="#ec7cb0" stroke="#ffffff" stroke-opacity="0.9" stroke-width="1"/>
<rect x="2601.8" y="1395.29" width="17.94" height="302.51" fill="#469c76" stroke="#ffffff" stroke-opacity="0.9" stroke-width="1"/>
<rect x="2608.06" y="1092.78" width="17.94" height="605.02" fill="#d39234" stroke="#ffffff" stroke-opacity="0.9" stroke-width="1"/>
<rect x="2627.44" y="1092.78" width="17.94" height="605.02" fill="#d39234" stroke="#ffffff" stroke-opacity="0.9" stroke-width="1"/>
<rect x="2634.85" y="1092.78" width="17.94" height="605.02" fill="#d39234" stroke="#ffffff" stroke-opacity="0.9" stroke-width="1"/>
<rect x="2645" y="1395.29" width="17.94" height="302.51" fill="#469c76" stroke="#ffffff" stroke-opacity="0.9" stroke-width="1"/>
<rect x="2651.81" y="1395.29" width="17.94" height="302.51" fill="#469c76" stroke="#ffffff" stroke-opacity="0.9" stroke-width="1"/>
<rect x="2653.07" y="1092.78" width="17.94" height="605.02" fill="#d39234" stroke="#ffffff" stroke-opacity="0.9" stroke-width="1"/>
<rect x="2663.83" y="1395.29" width="17.94" height="302.51" fill="#469c76" stroke="#ffffff" stroke-opacity="0.9" stroke-width="1"/>
<rect x="2678.7" y="1092.78" width="17.94" height="605.02" fill="#d39234" stroke="#ffffff" stroke-opacity="0.9" stroke-width="1"/>
<rect x="2725.21" y="1092.78" width="17.94" height="605.02" fill="#d39234" stroke="#ffffff" stroke-opacity="0.9" stroke-width="1"/>
<rect x="2733.05" y="1395.29" width="17.94" height="302.51" fill="#469c76" stroke="#ffffff" stroke-opacity="0.9" stroke-width="1"/>
<rect x="2750" y="1395.29" width="17.94" height="302.51" fill="#469c76" stroke="#ffffff" stroke-opacity="0.9" stroke-width="1"/>
<rect x="2767.44" y="1395.29" width="17.94" height="302.51" fill="#469c76" stroke="#ffffff" stroke-opacity="0.9" stroke-width="1"/>
<rect x="2777.8" y="1395.29" width="17.94" height="302.51" fill="#469c76" stroke="#ffffff" stroke-opacity="0.9" stroke-width="1"/>
<rect x="2796.71" y="1092.78" width="17.94" height="605.02" fill="#d39234" stroke="#ffffff" stroke-opacity="0.9" stroke-width="1"/>
<rect x="2822.97" y="1092.78" width="17.94" height="605.02" fill="#d39234" stroke="#ffffff" stroke-opacity="0.9" stroke-width="1"/>
<rect x="2883.77" y="781.1" width="17.94" height="916.7" fill="#ec7cb0" stroke="#ffffff" stroke-opacity="0.9" stroke-width="1"/>
<rect x="2883.77" y="781.1" width="17.94" height="916.7" fill="#ec7cb0" stroke="#ffffff" stroke-opacity="0.9" stroke-width="1"/>
<rect x="2883.77" y="781.1" width="17.94" height="916.7" fill="#ec7cb0" stroke="#ffffff" stroke-opacity="0.9" stroke-width="1"/>
<rect x="2884.62" y="1395.29" width="17.94" height="302.51" fill="#469c76" stroke="#ffffff" stroke-opacity="0.9" stroke-width="1"/>
<rect x="2889.1" y="1092.78" width="17.94" height="605.02" fill="#d39234" stroke="#ffffff" stroke-opacity="0.9" stroke-width="1"/>
<rect x="2909.4" y="1395.29" width="17.94" height="302.51" fill="#469c76" stroke="#ffffff" stroke-opacity="0.9" stroke-width="1"/>
<rect x="2914.23" y="1092.78" width="17.94" height="605.02" fill="#d39234" stroke="#ffffff" stroke-opacity="0.9" stroke-width="1"/>
<rect x="2914.23" y="1092.78" width="17.94" height="605.02" fill="#d39234" stroke="#ffffff" stroke-opacity="0.9" stroke-width="1"/>
<rect x="2919.45" y="1395.29" width="17.94" height="302.51" fill="#469c76" stroke="#ffffff" stroke-opacity="0.9" stroke-width="1"/>
<rect x="2925.08" y="1395.29" width="17.94" height="302.51" fill="#469c76" stroke="#ffffff" stroke-opacity="0.9" stroke-width="1"/>
<rect x="2931.1" y="1092.78" width="17.94" height="605.02" fill="#d39234" stroke="#ffffff" stroke-opacity="0.9" stroke-width="1"/>
<rect x="2931.1" y="1092.78" width="17.94" height="605.02" fill="#d39234" stroke="#ffffff" stroke-opacity="0.9" stroke-width="1"/>
<rect x="2947.39" y="1092.78" width="17.94" height="605.02" fill="#d39234" stroke="#ffffff" stroke-opacity="0.9" stroke-width="1"/>
<rect x="2960.67" y="1395.29" width="17.94" height="302.51" fill="#469c76" stroke="#ffffff" stroke-opacity="0.9" stroke-width="1"/>
<rect x="2966.96" y="1092.78" width="17.94" height="605.02" fill="#d39234" stroke="#ffffff" stroke-opacity="0.9" stroke-width="1"/>
<rect x="2966.96" y="1092.78" width="17.94" height="605.02" fill="#d39234" stroke="#ffffff" stroke-opacity="0.9" stroke-width="1"/>
<rect x="2992.9" y="1395.29" width="17.94" height="302.51" fill="#469c76" stroke="#ffffff" stroke-opacity="0.9" stroke-width="1"/>
<rect x="2995.89" y="1395.29" width="17.94" height="302.51" fill="#469c76" stroke="#ffffff" stroke-opacity="0.9" stroke-width="1"/>
<rect x="3002.24" y="1092.78" width="17.94" height="605.02" fill="#d39234" stroke="#ffffff" stroke-opacity="0.9" stroke-width="1"/>
<rect x="3002.24" y="1092.78" width="17.94" height="605.02" fill="#d39234" stroke="#ffffff" stroke-opacity="0.9" stroke-width="1"/>
<rect x="3007.2" y="1395.29" width="17.94" height="302.51" fill="#469c76" stroke="#ffffff" stroke-opacity="0.9" stroke-width="1"/>
<rect x="3011.93" y="1395.29" width="17.94" height="302.51" fill="#469c76" stroke="#ffffff" stroke-opacity="0.9" stroke-width="1"/>
<rect x="3032.32" y="1092.78" width="17.94" height="605.02" fill="#d39234" stroke="#ffffff" stroke-opacity="0.9" stroke-width="1"/>
<rect x="3046.28" y="1395.29" width="17.94" height="302.51" fill="#469c76" stroke="#ffffff" stroke-opacity="0.9" stroke-width="1"/>
<rect x="3065.3" y="1092.78" width="17.94" height="605.02" fill="#d39234" stroke="#ffffff" stroke-opacity="0.9" stroke-width="1"/>
<rect x="3065.3" y="1092.78" width="17.94" height="605.02" fill="#d39234" stroke="#ffffff" stroke-opacity="0.9" stroke-width="1"/>
<rect x="3079.76" y="1395.29" width="17.94" height="302.51" fill="#469c76" stroke="#ffffff" stroke-opacity="0.9" stroke-width="1"/>
<rect x="3092.6" y="1395.29" width="17.94" height="302.51" fill="#469c76" stroke="#ffffff" stroke-opacity="0.9" stroke-width="1"/>
<rect x="3108.51" y="1395.29" width="17.94" height="302.51" fill="#469c76" stroke="#ffffff" stroke-opacity="0.9" stroke-width="1"/>
<rect x="3122.44" y="1395.29" width="17.94" height="302.51" fill="#469c76" stroke="#ffffff" stroke-opacity="0.9" stroke-width="1"/>
<rect x="3139.37" y="1092.78" width="17.94" height="605.02" fill="#d39234" stroke="#ffffff" stroke-opacity="0.9" stroke-width="1"/>
<rect x="3139.37" y="1092.78" width="17.94" height="605.02" fill="#d39234" stroke="#ffffff" stroke-opacity="0.9" stroke-width="1"/>
<rect x="3140.1" y="1395.29" width="17.94" height="302.51" fill="#469c76" stroke="#ffffff" stroke-opacity="0.9" stroke-width="1"/>
<rect x="3143.94" y="1395.29" width="17.94" height="302.51" fill="#469c76" stroke="#ffffff" stroke-opacity="0.9" stroke-width="1"/>
<rect x="3172.04" y="1395.29" width="17.94" height="302.51" fill="#469c76" stroke="#ffffff" stroke-opacity="0.9" stroke-width="1"/>
<rect x="3180.12" y="1395.29" width="17.94" height="302.51" fill="#469c76" stroke="#ffffff" stroke-opacity="0.9" stroke-width="1"/>
<rect x="3191.37" y="781.1" width="17.94" height="916.7" fill="#ec7cb0" stroke="#ffffff" stroke-opacity="0.9" stroke-width="1"/>
<rect x="3194.21" y="1092.78" width="17.94" height="605.02" fill="#d39234" stroke="#ffffff" stroke-opacity="0.9" stroke-width="1"/>
<rect x="3194.21" y="1092.78" width="17.94" height="605.02" fill="#d39234" stroke="#ffffff" stroke-opacity="0.9" stroke-width="1"/>
<rect x="3211.2" y="1395.29" width="17.94" height="302.51" fill="#469c76" stroke="#ffffff" stroke-opacity="0.9" stroke-width="1"/>
<rect x="3219.63" y="1395.29" width="17.94" height="302.51" fill="#469c76" stroke="#ffffff" stroke-opacity="0.9" stroke-width="1"/>
</g>
<rect x="1532" y="756" width="2" height="944" rx="0" fill="#6f6f6f" />
<rect x="1532" y="756" width="1708" height="2" rx="0" fill="#6f6f6f" />
<rect x="3238" y="756" width="2" height="944" rx="0" fill="#6f6f6f" />
<rect x="1532" y="1697.8" width="1708" height="2" rx="0" fill="#707070" />
<text x="1518.5" y="1729.4" font-family="Liberation Sans" font-size="26.16" font-weight="400" fill="#ffffff" textLength="30.88" lengthAdjust="spacingAndGlyphs" >20</text>
<text x="1608.53" y="1729.4" font-family="Liberation Sans" font-size="26.16" font-weight="400" fill="#ffffff" textLength="30.52" lengthAdjust="spacingAndGlyphs" >30</text>
<text x="1698.64" y="1729.4" font-family="Liberation Sans" font-size="26.16" font-weight="400" fill="#ffffff" textLength="30.08" lengthAdjust="spacingAndGlyphs" >40</text>
<text x="1787.84" y="1729.4" font-family="Liberation Sans" font-size="26.16" font-weight="400" fill="#ffffff" textLength="30.57" lengthAdjust="spacingAndGlyphs" >50</text>
<text x="1877.21" y="1729.4" font-family="Liberation Sans" font-size="26.16" font-weight="400" fill="#ffffff" textLength="30.9" lengthAdjust="spacingAndGlyphs" >60</text>
<text x="1966.87" y="1729.4" font-family="Liberation Sans" font-size="26.16" font-weight="400" fill="#ffffff" textLength="30.91" lengthAdjust="spacingAndGlyphs" >70</text>
<text x="2056.78" y="1729.4" font-family="Liberation Sans" font-size="26.16" font-weight="400" fill="#ffffff" textLength="30.68" lengthAdjust="spacingAndGlyphs" >80</text>
<text x="2146.36" y="1729.4" font-family="Liberation Sans" font-size="26.16" font-weight="400" fill="#ffffff" textLength="30.78" lengthAdjust="spacingAndGlyphs" >90</text>
<text x="2228.14" y="1729.4" font-family="Liberation Sans" font-size="26.16" font-weight="400" fill="#ffffff" textLength="45.76" lengthAdjust="spacingAndGlyphs" >100</text>
<text x="2317.82" y="1729.4" font-family="Liberation Sans" font-size="26.16" font-weight="400" fill="#ffffff" textLength="45.76" lengthAdjust="spacingAndGlyphs" >110</text>
<text x="2407.5" y="1729.4" font-family="Liberation Sans" font-size="26.16" font-weight="400" fill="#ffffff" textLength="45.76" lengthAdjust="spacingAndGlyphs" >120</text>
<text x="2497.18" y="1729.4" font-family="Liberation Sans" font-size="26.16" font-weight="400" fill="#ffffff" textLength="45.76" lengthAdjust="spacingAndGlyphs" >130</text>
<text x="2586.86" y="1729.4" font-family="Liberation Sans" font-size="26.16" font-weight="400" fill="#ffffff" textLength="45.76" lengthAdjust="spacingAndGlyphs" >140</text>
<text x="2676.54" y="1729.4" font-family="Liberation Sans" font-size="26.16" font-weight="400" fill="#ffffff" textLength="45.76" lengthAdjust="spacingAndGlyphs" >150</text>
<text x="2766.22" y="1729.4" font-family="Liberation Sans" font-size="26.16" font-weight="400" fill="#ffffff" textLength="45.76" lengthAdjust="spacingAndGlyphs" >160</text>
<text x="2855.9" y="1729.4" font-family="Liberation Sans" font-size="26.16" font-weight="400" fill="#ffffff" textLength="45.76" lengthAdjust="spacingAndGlyphs" >170</text>
<text x="2945.57" y="1729.4" font-family="Liberation Sans" font-size="26.16" font-weight="400" fill="#ffffff" textLength="45.76" lengthAdjust="spacingAndGlyphs" >180</text>
<text x="3035.25" y="1729.4" font-family="Liberation Sans" font-size="26.16" font-weight="400" fill="#ffffff" textLength="45.76" lengthAdjust="spacingAndGlyphs" >190</text>
<text x="3125.66" y="1729.4" font-family="Liberation Sans" font-size="26.16" font-weight="400" fill="#ffffff" textLength="45.01" lengthAdjust="spacingAndGlyphs" >200</text>
<text x="3215.34" y="1729.4" font-family="Liberation Sans" font-size="26.16" font-weight="400" fill="#ffffff" textLength="45.01" lengthAdjust="spacingAndGlyphs" >210</text>
<text x="2275.34" y="1783" font-family="Liberation Sans" font-size="30.09" font-weight="400" fill="#f0f0f0" textLength="219.97" lengthAdjust="spacingAndGlyphs" >Frequency [Hz]</text>
<text x="1532.59" y="752" font-family="Liberation Sans" font-size="34.88" font-weight="700" fill="#ffffff" textLength="244.71" lengthAdjust="spacingAndGlyphs" >Room Modes</text>
<rect x="3272.5" y="758.8" width="558.5" height="937.2" rx="0" fill="none" stroke="#4a4a4a" stroke-width="2" />
<clipPath id="lclip"><rect x="3273" y="760" width="557" height="936"/></clipPath><g clip-path="url(#lclip)">
<rect x="3301.5" y="776.7" width="25.5" height="25" rx="0" fill="#ec7cb0" stroke="#ffffff" stroke-width="0.8" />
<text x="3353.14" y="798.2" font-family="Liberation Sans" font-size="26.02" font-weight="400" fill="#f5f5f5" textLength="354.81" lengthAdjust="spacingAndGlyphs" >1st Order Axial Mode at 34Hz</text>
<rect x="3301.5" y="814.76" width="25.5" height="25" rx="0" fill="#ec7cb0" stroke="#ffffff" stroke-width="0.8" />
<text x="3353.14" y="836.26" font-family="Liberation Sans" font-size="26.02" font-weight="400" fill="#f5f5f5" textLength="354.81" lengthAdjust="spacingAndGlyphs" >1st Order Axial Mode at 43Hz</text>
<rect x="3301.5" y="852.82" width="25.5" height="25" rx="0" fill="#ec7cb0" stroke="#ffffff" stroke-width="0.8" />
<text x="3353.14" y="874.32" font-family="Liberation Sans" font-size="26.02" font-weight="400" fill="#f5f5f5" textLength="354.81" lengthAdjust="spacingAndGlyphs" >1st Order Axial Mode at 57Hz</text>
<rect x="3301.5" y="890.88" width="25.5" height="25" rx="0" fill="#ec7cb0" stroke="#ffffff" stroke-width="0.8" />
<text x="3353.84" y="912.38" font-family="Liberation Sans" font-size="26.02" font-weight="400" fill="#f5f5f5" textLength="363.85" lengthAdjust="spacingAndGlyphs" >2nd Order Axial Mode at 69Hz</text>
<rect x="3301.5" y="928.94" width="25.5" height="25" rx="0" fill="#ec7cb0" stroke="#ffffff" stroke-width="0.8" />
<text x="3353.84" y="950.44" font-family="Liberation Sans" font-size="26.02" font-weight="400" fill="#f5f5f5" textLength="363.85" lengthAdjust="spacingAndGlyphs" >2nd Order Axial Mode at 86Hz</text>
<rect x="3301.5" y="967" width="25.5" height="25" rx="0" fill="#ec7cb0" stroke="#ffffff" stroke-width="0.8" />
<text x="3354.17" y="988.5" font-family="Liberation Sans" font-size="26.02" font-weight="400" fill="#f5f5f5" textLength="372.86" lengthAdjust="spacingAndGlyphs" >3rd Order Axial Mode at 103Hz</text>
<rect x="3301.5" y="1005.06" width="25.5" height="25" rx="0" fill="#ec7cb0" stroke="#ffffff" stroke-width="0.8" />
<text x="3353.84" y="1026.56" font-family="Liberation Sans" font-size="26.02" font-weight="400" fill="#f5f5f5" textLength="378.9" lengthAdjust="spacingAndGlyphs" >2nd Order Axial Mode at 114Hz</text>
<rect x="3301.5" y="1043.12" width="25.5" height="25" rx="0" fill="#ec7cb0" stroke="#ffffff" stroke-width="0.8" />
<text x="3354.17" y="1064.62" font-family="Liberation Sans" font-size="26.02" font-weight="400" fill="#f5f5f5" textLength="372.86" lengthAdjust="spacingAndGlyphs" >3rd Order Axial Mode at 129Hz</text>
<rect x="3301.5" y="1081.18" width="25.5" height="25" rx="0" fill="#ec7cb0" stroke="#ffffff" stroke-width="0.8" />
<text x="3354.58" y="1102.68" font-family="Liberation Sans" font-size="26.02" font-weight="400" fill="#f5f5f5" textLength="371.37" lengthAdjust="spacingAndGlyphs" >4th Order Axial Mode at 137Hz</text>
<rect x="3301.5" y="1119.24" width="25.5" height="25" rx="0" fill="#ec7cb0" stroke="#ffffff" stroke-width="0.8" />
<text x="3354.12" y="1140.74" font-family="Liberation Sans" font-size="26.02" font-weight="400" fill="#f5f5f5" textLength="371.37" lengthAdjust="spacingAndGlyphs" >5th Order Axial Mode at 172Hz</text>
<rect x="3301.5" y="1157.3" width="25.5" height="25" rx="0" fill="#ec7cb0" stroke="#ffffff" stroke-width="0.8" />
<text x="3354.58" y="1178.8" font-family="Liberation Sans" font-size="26.02" font-weight="400" fill="#f5f5f5" textLength="371.37" lengthAdjust="spacingAndGlyphs" >4th Order Axial Mode at 172Hz</text>
<rect x="3301.5" y="1195.36" width="25.5" height="25" rx="0" fill="#ec7cb0" stroke="#ffffff" stroke-width="0.8" />
<text x="3354.17" y="1216.86" font-family="Liberation Sans" font-size="26.02" font-weight="400" fill="#f5f5f5" textLength="372.86" lengthAdjust="spacingAndGlyphs" >3rd Order Axial Mode at 172Hz</text>
<rect x="3301.5" y="1233.42" width="25.5" height="25" rx="0" fill="#ec7cb0" stroke="#ffffff" stroke-width="0.8" />
<text x="3353.83" y="1254.92" font-family="Liberation Sans" font-size="26.02" font-weight="400" fill="#f5f5f5" textLength="371.37" lengthAdjust="spacingAndGlyphs" >6th Order Axial Mode at 206Hz</text>
<rect x="3301.5" y="1290.88" width="25.5" height="25" rx="0" fill="#d39234" stroke="#ffffff" stroke-width="0.8" />
<text x="3353.14" y="1312.38" font-family="Liberation Sans" font-size="26.02" font-weight="400" fill="#f5f5f5" textLength="422.5" lengthAdjust="spacingAndGlyphs" >1st Order Tangential Mode at 55Hz</text>
<rect x="3301.5" y="1328.94" width="25.5" height="25" rx="0" fill="#d39234" stroke="#ffffff" stroke-width="0.8" />
<text x="3353.14" y="1350.44" font-family="Liberation Sans" font-size="26.02" font-weight="400" fill="#f5f5f5" textLength="422.5" lengthAdjust="spacingAndGlyphs" >1st Order Tangential Mode at 67Hz</text>
<rect x="3301.5" y="1367" width="25.5" height="25" rx="0" fill="#d39234" stroke="#ffffff" stroke-width="0.8" />
<text x="3353.14" y="1388.5" font-family="Liberation Sans" font-size="26.02" font-weight="400" fill="#f5f5f5" textLength="422.5" lengthAdjust="spacingAndGlyphs" >1st Order Tangential Mode at 71Hz</text>
<rect x="3301.5" y="1405.06" width="25.5" height="25" rx="0" fill="#d39234" stroke="#ffffff" stroke-width="0.8" />
<text x="3353.84" y="1426.56" font-family="Liberation Sans" font-size="26.02" font-weight="400" fill="#f5f5f5" textLength="431.55" lengthAdjust="spacingAndGlyphs" >2nd Order Tangential Mode at 81Hz</text>
<rect x="3301.5" y="1443.12" width="25.5" height="25" rx="0" fill="#d39234" stroke="#ffffff" stroke-width="0.8" />
<text x="3353.84" y="1464.62" font-family="Liberation Sans" font-size="26.02" font-weight="400" fill="#f5f5f5" textLength="431.55" lengthAdjust="spacingAndGlyphs" >2nd Order Tangential Mode at 89Hz</text>
<rect x="3301.5" y="1481.18" width="25.5" height="25" rx="0" fill="#d39234" stroke="#ffffff" stroke-width="0.8" />
<text x="3353.84" y="1502.68" font-family="Liberation Sans" font-size="26.02" font-weight="400" fill="#f5f5f5" textLength="431.55" lengthAdjust="spacingAndGlyphs" >2nd Order Tangential Mode at 92Hz</text>
<rect x="3301.5" y="1519.24" width="25.5" height="25" rx="0" fill="#d39234" stroke="#ffffff" stroke-width="0.8" />
<text x="3353.84" y="1540.74" font-family="Liberation Sans" font-size="26.02" font-weight="400" fill="#f5f5f5" textLength="446.59" lengthAdjust="spacingAndGlyphs" >2nd Order Tangential Mode at 103Hz</text>
<rect x="3301.5" y="1557.3" width="25.5" height="25" rx="0" fill="#d39234" stroke="#ffffff" stroke-width="0.8" />
<text x="3353.84" y="1578.8" font-family="Liberation Sans" font-size="26.02" font-weight="400" fill="#f5f5f5" textLength="446.59" lengthAdjust="spacingAndGlyphs" >2nd Order Tangential Mode at 110Hz</text>
<rect x="3301.5" y="1595.36" width="25.5" height="25" rx="0" fill="#d39234" stroke="#ffffff" stroke-width="0.8" />
<text x="3354.17" y="1616.86" font-family="Liberation Sans" font-size="26.02" font-weight="400" fill="#f5f5f5" textLength="440.55" lengthAdjust="spacingAndGlyphs" >3rd Order Tangential Mode at 111Hz</text>
<rect x="3301.5" y="1633.42" width="25.5" height="25" rx="0" fill="#d39234" stroke="#ffffff" stroke-width="0.8" />
<text x="3354.17" y="1654.92" font-family="Liberation Sans" font-size="26.02" font-weight="400" fill="#f5f5f5" textLength="440.55" lengthAdjust="spacingAndGlyphs" >3rd Order Tangential Mode at 118Hz</text>
<rect x="3301.5" y="1671.48" width="25.5" height="25" rx="0" fill="#d39234" stroke="#ffffff" stroke-width="0.8" />
<text x="3353.84" y="1692.98" font-family="Liberation Sans" font-size="26.02" font-weight="400" fill="#f5f5f5" textLength="446.59" lengthAdjust="spacingAndGlyphs" >2nd Order Tangential Mode at 119Hz</text>
<rect x="3301.5" y="1709.54" width="25.5" height="25" rx="0" fill="#d39234" stroke="#ffffff" stroke-width="0.8" />
<text x="3353.84" y="1731.04" font-family="Liberation Sans" font-size="26.02" font-weight="400" fill="#f5f5f5" textLength="446.59" lengthAdjust="spacingAndGlyphs" >2nd Order Tangential Mode at 122Hz</text>
<rect x="3301.5" y="1747.6" width="25.5" height="25" rx="0" fill="#d39234" stroke="#ffffff" stroke-width="0.8" />
<text x="3354.17" y="1769.1" font-family="Liberation Sans" font-size="26.02" font-weight="400" fill="#f5f5f5" textLength="440.55" lengthAdjust="spacingAndGlyphs" >3rd Order Tangential Mode at 133Hz</text>
<rect x="3301.5" y="1785.66" width="25.5" height="25" rx="0" fill="#d39234" stroke="#ffffff" stroke-width="0.8" />
<text x="3353.84" y="1807.16" font-family="Liberation Sans" font-size="26.02" font-weight="400" fill="#f5f5f5" textLength="446.59" lengthAdjust="spacingAndGlyphs" >2nd Order Tangential Mode at 133Hz</text>
<rect x="3301.5" y="1823.72" width="25.5" height="25" rx="0" fill="#d39234" stroke="#ffffff" stroke-width="0.8" />
<text x="3354.17" y="1845.22" font-family="Liberation Sans" font-size="26.02" font-weight="400" fill="#f5f5f5" textLength="440.55" lengthAdjust="spacingAndGlyphs" >3rd Order Tangential Mode at 134Hz</text>
<rect x="3301.5" y="1861.78" width="25.5" height="25" rx="0" fill="#d39234" stroke="#ffffff" stroke-width="0.8" />
<text x="3354.17" y="1883.28" font-family="Liberation Sans" font-size="26.02" font-weight="400" fill="#f5f5f5" textLength="440.55" lengthAdjust="spacingAndGlyphs" >3rd Order Tangential Mode at 141Hz</text>
<rect x="3301.5" y="1899.84" width="25.5" height="25" rx="0" fill="#d39234" stroke="#ffffff" stroke-width="0.8" />
<text x="3353.84" y="1921.34" font-family="Liberation Sans" font-size="26.02" font-weight="400" fill="#f5f5f5" textLength="446.59" lengthAdjust="spacingAndGlyphs" >2nd Order Tangential Mode at 143Hz</text>
<rect x="3301.5" y="1937.9" width="25.5" height="25" rx="0" fill="#d39234" stroke="#ffffff" stroke-width="0.8" />
<text x="3354.58" y="1959.4" font-family="Liberation Sans" font-size="26.02" font-weight="400" fill="#f5f5f5" textLength="439.06" lengthAdjust="spacingAndGlyphs" >4th Order Tangential Mode at 144Hz</text>
<rect x="3301.5" y="1975.96" width="25.5" height="25" rx="0" fill="#d39234" stroke="#ffffff" stroke-width="0.8" />
<text x="3354.17" y="1997.46" font-family="Liberation Sans" font-size="26.02" font-weight="400" fill="#f5f5f5" textLength="440.55" lengthAdjust="spacingAndGlyphs" >3rd Order Tangential Mode at 146Hz</text>
<rect x="3301.5" y="2014.02" width="25.5" height="25" rx="0" fill="#d39234" stroke="#ffffff" stroke-width="0.8" />
<text x="3354.58" y="2035.52" font-family="Liberation Sans" font-size="26.02" font-weight="400" fill="#f5f5f5" textLength="439.06" lengthAdjust="spacingAndGlyphs" >4th Order Tangential Mode at 149Hz</text>
<rect x="3301.5" y="2052.08" width="25.5" height="25" rx="0" fill="#d39234" stroke="#ffffff" stroke-width="0.8" />
<text x="3354.17" y="2073.58" font-family="Liberation Sans" font-size="26.02" font-weight="400" fill="#f5f5f5" textLength="440.55" lengthAdjust="spacingAndGlyphs" >3rd Order Tangential Mode at 154Hz</text>
<rect x="3301.5" y="2090.14" width="25.5" height="25" rx="0" fill="#d39234" stroke="#ffffff" stroke-width="0.8" />
<text x="3354.58" y="2111.64" font-family="Liberation Sans" font-size="26.02" font-weight="400" fill="#f5f5f5" textLength="439.06" lengthAdjust="spacingAndGlyphs" >4th Order Tangential Mode at 162Hz</text>
<rect x="3301.5" y="2128.2" width="25.5" height="25" rx="0" fill="#d39234" stroke="#ffffff" stroke-width="0.8" />
<text x="3354.17" y="2149.7" font-family="Liberation Sans" font-size="26.02" font-weight="400" fill="#f5f5f5" textLength="440.55" lengthAdjust="spacingAndGlyphs" >3rd Order Tangential Mode at 165Hz</text>
<rect x="3301.5" y="2166.26" width="25.5" height="25" rx="0" fill="#d39234" stroke="#ffffff" stroke-width="0.8" />
<text x="3354.17" y="2187.76" font-family="Liberation Sans" font-size="26.02" font-weight="400" fill="#f5f5f5" textLength="440.55" lengthAdjust="spacingAndGlyphs" >3rd Order Tangential Mode at 172Hz</text>
<rect x="3301.5" y="2204.32" width="25.5" height="25" rx="0" fill="#d39234" stroke="#ffffff" stroke-width="0.8" />
<text x="3354.58" y="2225.82" font-family="Liberation Sans" font-size="26.02" font-weight="400" fill="#f5f5f5" textLength="439.06" lengthAdjust="spacingAndGlyphs" >4th Order Tangential Mode at 175Hz</text>
<rect x="3301.5" y="2242.38" width="25.5" height="25" rx="0" fill="#d39234" stroke="#ffffff" stroke-width="0.8" />
<text x="3354.17" y="2263.88" font-family="Liberation Sans" font-size="26.02" font-weight="400" fill="#f5f5f5" textLength="440.55" lengthAdjust="spacingAndGlyphs" >3rd Order Tangential Mode at 175Hz</text>
<rect x="3301.5" y="2280.44" width="25.5" height="25" rx="0" fill="#d39234" stroke="#ffffff" stroke-width="0.8" />
<text x="3354.12" y="2301.94" font-family="Liberation Sans" font-size="26.02" font-weight="400" fill="#f5f5f5" textLength="439.06" lengthAdjust="spacingAndGlyphs" >5th Order Tangential Mode at 177Hz</text>
<rect x="3301.5" y="2318.5" width="25.5" height="25" rx="0" fill="#d39234" stroke="#ffffff" stroke-width="0.8" />
<text x="3354.17" y="2340" font-family="Liberation Sans" font-size="26.02" font-weight="400" fill="#f5f5f5" textLength="440.55" lengthAdjust="spacingAndGlyphs" >3rd Order Tangential Mode at 177Hz</text>
<rect x="3301.5" y="2356.56" width="25.5" height="25" rx="0" fill="#d39234" stroke="#ffffff" stroke-width="0.8" />
<text x="3354.58" y="2378.06" font-family="Liberation Sans" font-size="26.02" font-weight="400" fill="#f5f5f5" textLength="439.06" lengthAdjust="spacingAndGlyphs" >4th Order Tangential Mode at 179Hz</text>
<rect x="3301.5" y="2394.62" width="25.5" height="25" rx="0" fill="#d39234" stroke="#ffffff" stroke-width="0.8" />
<text x="3354.12" y="2416.12" font-family="Liberation Sans" font-size="26.02" font-weight="400" fill="#f5f5f5" textLength="439.06" lengthAdjust="spacingAndGlyphs" >5th Order Tangential Mode at 181Hz</text>
<rect x="3301.5" y="2432.68" width="25.5" height="25" rx="0" fill="#d39234" stroke="#ffffff" stroke-width="0.8" />
<text x="3354.58" y="2454.18" font-family="Liberation Sans" font-size="26.02" font-weight="400" fill="#f5f5f5" textLength="439.06" lengthAdjust="spacingAndGlyphs" >4th Order Tangential Mode at 181Hz</text>
<rect x="3301.5" y="2470.74" width="25.5" height="25" rx="0" fill="#d39234" stroke="#ffffff" stroke-width="0.8" />
<text x="3354.58" y="2492.24" font-family="Liberation Sans" font-size="26.02" font-weight="400" fill="#f5f5f5" textLength="439.06" lengthAdjust="spacingAndGlyphs" >4th Order Tangential Mode at 185Hz</text>
<rect x="3301.5" y="2508.8" width="25.5" height="25" rx="0" fill="#d39234" stroke="#ffffff" stroke-width="0.8" />
<text x="3354.17" y="2530.3" font-family="Liberation Sans" font-size="26.02" font-weight="400" fill="#f5f5f5" textLength="440.55" lengthAdjust="spacingAndGlyphs" >3rd Order Tangential Mode at 185Hz</text>
<rect x="3301.5" y="2546.86" width="25.5" height="25" rx="0" fill="#d39234" stroke="#ffffff" stroke-width="0.8" />
<text x="3354.58" y="2568.36" font-family="Liberation Sans" font-size="26.02" font-weight="400" fill="#f5f5f5" textLength="439.06" lengthAdjust="spacingAndGlyphs" >4th Order Tangential Mode at 188Hz</text>
<rect x="3301.5" y="2584.92" width="25.5" height="25" rx="0" fill="#d39234" stroke="#ffffff" stroke-width="0.8" />
<text x="3354.12" y="2606.42" font-family="Liberation Sans" font-size="26.02" font-weight="400" fill="#f5f5f5" textLength="439.06" lengthAdjust="spacingAndGlyphs" >5th Order Tangential Mode at 192Hz</text>
<rect x="3301.5" y="2622.98" width="25.5" height="25" rx="0" fill="#d39234" stroke="#ffffff" stroke-width="0.8" />
<text x="3354.17" y="2644.48" font-family="Liberation Sans" font-size="26.02" font-weight="400" fill="#f5f5f5" textLength="440.55" lengthAdjust="spacingAndGlyphs" >3rd Order Tangential Mode at 192Hz</text>
<rect x="3301.5" y="2661.04" width="25.5" height="25" rx="0" fill="#d39234" stroke="#ffffff" stroke-width="0.8" />
<text x="3354.58" y="2682.54" font-family="Liberation Sans" font-size="26.02" font-weight="400" fill="#f5f5f5" textLength="439.06" lengthAdjust="spacingAndGlyphs" >4th Order Tangential Mode at 200Hz</text>
<rect x="3301.5" y="2699.1" width="25.5" height="25" rx="0" fill="#d39234" stroke="#ffffff" stroke-width="0.8" />
<text x="3354.17" y="2720.6" font-family="Liberation Sans" font-size="26.02" font-weight="400" fill="#f5f5f5" textLength="440.55" lengthAdjust="spacingAndGlyphs" >3rd Order Tangential Mode at 200Hz</text>
<rect x="3301.5" y="2737.16" width="25.5" height="25" rx="0" fill="#d39234" stroke="#ffffff" stroke-width="0.8" />
<text x="3354.12" y="2758.66" font-family="Liberation Sans" font-size="26.02" font-weight="400" fill="#f5f5f5" textLength="439.06" lengthAdjust="spacingAndGlyphs" >5th Order Tangential Mode at 206Hz</text>
<rect x="3301.5" y="2775.22" width="25.5" height="25" rx="0" fill="#d39234" stroke="#ffffff" stroke-width="0.8" />
<text x="3354.58" y="2796.72" font-family="Liberation Sans" font-size="26.02" font-weight="400" fill="#f5f5f5" textLength="439.06" lengthAdjust="spacingAndGlyphs" >4th Order Tangential Mode at 206Hz</text>
</g>
<rect x="3814.2" y="766" width="12.1" height="261.5" rx="6" fill="#8890a8" />
</svg></body></html>
